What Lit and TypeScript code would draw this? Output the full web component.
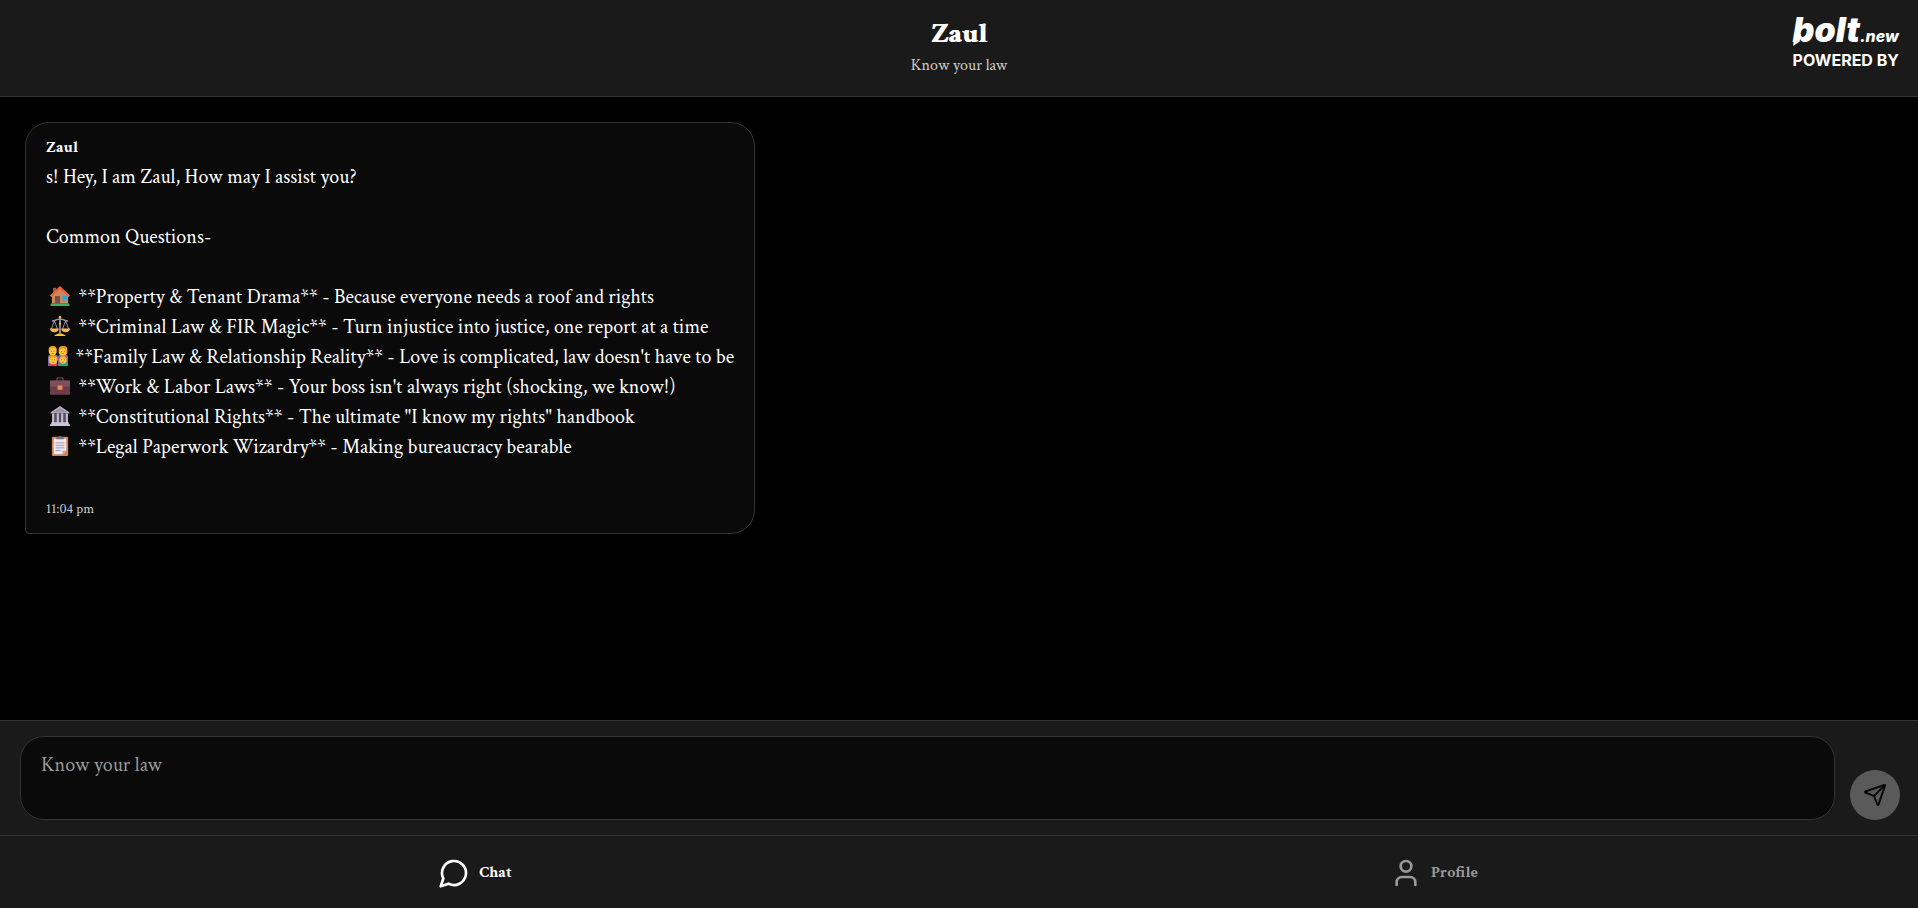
import { LitElement, html, css, svg } from "lit";
import { customElement, state } from "lit/decorators.js";

const home = svg`
  <rect x="1" y="28" width="30" height="4" rx="1" fill="#3fae6b"/>
  <rect x="5" y="3" width="5" height="9" fill="#b3593f"/>
  <path d="M3 16 16 4l13 12v12H3z" fill="#c98a5c"/>
  <path d="M16 0 0 15l2 3L16 5l14 13 2-3z" fill="#f4623a"/>
  <rect x="8" y="16" width="8" height="12" fill="#7d4a4c"/>
  <rect x="20" y="16" width="7" height="7" fill="#29a4e8"/>`;
const scales = svg`
  <path d="M16 2v26" stroke="#b9abc6" stroke-width="2.4"/>
  <path d="M3 8c5 0 7-3 13-3s8 3 13 3" stroke="#a294b0" stroke-width="2" fill="none"/>
  <path d="M7 8 2 21M7 8l5 13M25 8l-5 13M25 8l5 13" stroke="#b9abc6" stroke-width="1.3"/>
  <path d="M0 20h14c0 4-3 6-7 6s-7-2-7-6zM18 20h14c0 4-3 6-7 6s-7-2-7-6z" fill="#f8b84b"/>
  <circle cx="16" cy="2" r="2" fill="#f9c23c"/><circle cx="16" cy="12" r="1.8" fill="#f9c23c"/>
  <path d="M7 32c0-2 3-2 6-4h6c3 2 6 2 6 4z" fill="#fcc22e"/>`;
const family = svg`
  <path d="M0 17q0-3 4-3h8q4 0 4 3v6H0z" fill="#4b83d4"/>
  <path d="M16 17q0-3 4-3h8q4 0 4 3v15H16z" fill="#8b5fbf"/>
  <rect x="0" y="20" width="5" height="12" fill="#3b78c8"/>
  <rect x="1" y="0" width="13" height="14" rx="6" fill="#f59f16"/>
  <rect x="2" y="3" width="11" height="12" rx="5" fill="#ffc83d"/>
  <rect x="17" y="0" width="14" height="15" rx="6" fill="#ee9b19"/>
  <rect x="18" y="4" width="11" height="11" rx="5" fill="#ffc83d"/>
  <path d="M1 32v-3q0-3 4-3h7q3 0 3 3v3z" fill="#e5375e"/>
  <path d="M17 32v-3q0-3 4-3h6q4 0 4 3v3z" fill="#25a878"/>
  <rect x="1" y="15" width="14" height="14" rx="6" fill="#f59f16"/>
  <rect x="3" y="18" width="11" height="11" rx="5" fill="#ffc83d"/>
  <rect x="18" y="16" width="12" height="12" rx="6" fill="#f8ad27"/>
  <rect x="19" y="19" width="10" height="9" rx="5" fill="#ffc83d"/>
  <path d="M5 8h1M9 8h1M21 9h1M26 9h1M6 22h1M10 22h1M21 22h1M26 22h1" stroke="#5b3b24" stroke-width="1.5"/>
  <path d="M6 12h3M22 12h3M7 26h3M22 26h3" stroke="#c04f2b" stroke-width="1.2"/>`;
const briefcase = svg`
  <path d="M11 8V5q0-2 2-2h6q2 0 2 2v3" stroke="#6b4650" stroke-width="2" fill="none"/>
  <rect x="0" y="7" width="32" height="23" rx="2" fill="#6d3d4b"/>
  <path d="M0 9q0-2 2-2h28q2 0 2 2v9H0z" fill="#80505a"/>
  <path d="M0 18h32" stroke="#5a3442" stroke-width="1"/>
  <rect x="12" y="15" width="8" height="7" rx="1" fill="#f08a5d"/>`;
const classical = svg`
  <path d="M1 10 16 0l15 10v2H1z" fill="#b4acbc"/>
  <path d="M5 10 16 3l11 7z" fill="#998ea4"/>
  <rect x="4" y="12" width="24" height="15" fill="#584b68"/>
  <path d="M5 12v15M12.5 12v15M19.5 12v15M27 12v15" stroke="#c6bdcc" stroke-width="3.4"/>
  <path d="M2 26h28v3H2zM0 29h32v3H0z" fill="#cdc4d6"/>`;
const clipboard = svg`
  <rect x="3" y="1" width="26" height="31" rx="2" fill="#d98252"/>
  <path d="M6 4h20v19l-6 6H6z" fill="#eee8f4"/>
  <path d="M20 29v-6h6z" fill="#b8a9c8"/>
  <path d="M10 5V2h3q0-2 3-2t3 2h3v3z" fill="#74707c"/>
  <path d="M9 11h14M9 15h14M9 19h14M9 23h8" stroke="#9c93aa" stroke-width="1.5"/>`;

const topics = [
  { icon: home, name: "Property & Tenant Drama", note: "Because everyone needs a roof and rights" },
  { icon: scales, name: "Criminal Law & FIR Magic", note: "Turn injustice into justice, one report at a time" },
  { icon: family, snug: true, name: "Family Law & Relationship Reality", note: "Love is complicated, law doesn't have to be" },
  { icon: briefcase, name: "Work & Labor Laws", note: "Your boss isn't always right (shocking, we know!)" },
  { icon: classical, name: "Constitutional Rights", note: 'The ultimate "I know my rights" handbook' },
  { icon: clipboard, name: "Legal Paperwork Wizardry", note: "Making bureaucracy bearable" },
];

@customElement("app-root")
export class AppRoot extends LitElement {
  @state() private draft = "";
  @state() private tab = "chat";

  static styles = css`
    :host {
      display: flex;
      flex-direction: column;
      height: 100vh;
      background: #000;
      color: #fff;
      font-family: "Crimson Text", "Liberation Serif", serif;
    }
    * { box-sizing: border-box; }
    .header {
      position: relative;
      padding: 17px 20px 20px;
      text-align: center;
      background: #1a1a1a;
      border-bottom: 1px solid #333;
    }
    .title { margin: 0; font-size: 28px; line-height: 34px; font-weight: 700; text-shadow: 1px 0 currentColor; }
    .tagline { margin: 5px 0 0; font-size: 16px; line-height: 20px; color: #ccc; }
    .badge {
      position: absolute;
      top: 10px;
      right: 19px;
      color: #fff;
      text-decoration: none;
      font-family: Inter, sans-serif;
      text-align: left;
    }
    .brand { display: flex; align-items: baseline; height: 40px; line-height: 40px; font-style: italic; }
    .bolt { font-size: 34px; font-weight: 900; }
    .new { font-size: 16px; font-weight: 800; }
    .tail { position: absolute; left: 0; top: 24px; width: 10px; height: 12px; fill: #fff; }
    .powered { display: block; font-size: 16px; line-height: 20px; font-weight: 700; }
    .log { flex: 1; min-height: 0; overflow: auto; padding: 25px; }
    .bubble {
      width: fit-content;
      max-width: 80%;
      padding: 15px 20px;
      background: #0a0a0a;
      border: 1px solid #333;
      border-radius: 24px 24px 24px 4px;
    }
    .sender { margin: 0 0 4px; font-size: 16px; line-height: 20px; font-weight: 700; }
    .text { margin: 0 0 30px; font-size: 20px; line-height: 30px; }
    .topics { list-style: none; padding: 0; }
    .emoji { width: 20px; height: 20px; margin: 0 4px; vertical-align: -3px; }
    .emoji.snug { margin: 0 3px 0 2px; }
    .time { display: block; margin-top: 38px; font-size: 14px; line-height: 18px; color: #ccc; }
    .composer {
      display: flex;
      align-items: flex-end;
      gap: 15px;
      padding: 15px 18px 15px 20px;
      background: #1a1a1a;
      border-top: 1px solid #333;
    }
    .input {
      flex: 1;
      height: 84px;
      padding: 16px 20px;
      resize: none;
      outline: none;
      color: #fff;
      background: #0a0a0a;
      border: 1px solid #333;
      border-radius: 24px;
      font: 20px/25px "Crimson Text", "Liberation Serif", serif;
    }
    .input::placeholder { color: #999; opacity: 1; }
    .send {
      display: grid;
      place-items: center;
      width: 50px;
      height: 50px;
      padding: 0;
      border: 0;
      border-radius: 50%;
      background: #5a5a5a;
      color: #0a0a0a;
    }
    .line { fill: none; stroke: currentColor; stroke-width: 2; stroke-linecap: round; stroke-linejoin: round; }
    .send .line { width: 24px; height: 24px; }
    .nav {
      display: flex;
      justify-content: space-around;
      height: 73px;
      padding-top: 2px;
      background: #1a1a1a;
      border-top: 1px solid #333;
    }
    .tab {
      display: flex;
      align-items: center;
      gap: 9px;
      padding: 0 2px 0 0;
      border: 0;
      background: none;
      color: #999;
      font: 700 16px/20px "Crimson Text", "Liberation Serif", serif;
    }
    .tab.active { color: #fff; }
    .tab .line { width: 32px; height: 32px; }
  `;

  private pick(name: string) {
    this.tab = name;
  }

  render() {
    return html`
      <header class="header">
        <h1 class="title">Zaul</h1>
        <p class="tagline">Know your law</p>
        <a class="badge" href="#">
          <span class="brand"><span class="bolt">bolt</span><span class="new">.new</span></span>
          <svg class="tail" viewBox="0 0 10 12" aria-hidden="true"><path d="M2 0h6L6 8 0 12z" /></svg>
          <span class="powered">POWERED BY</span>
        </a>
      </header>

      <main class="log">
        <article class="bubble">
          <h2 class="sender">Zaul</h2>
          <p class="text">s! Hey, I am Zaul, How may I assist you?</p>
          <p class="text">Common Questions-</p>
          <ul class="text topics">
            ${topics.map(
              (t) => html`<li>
                <svg class="emoji ${t.snug ? "snug" : ""}" viewBox="0 0 32 32" aria-hidden="true" fill="none">${t.icon}</svg>
                **${t.name}** - ${t.note}
              </li>`
            )}
          </ul>
          <time class="time">11:04 pm</time>
        </article>
      </main>

      <form class="composer" @submit=${(e: Event) => e.preventDefault()}>
        <textarea
          class="input"
          aria-label="Message"
          placeholder="Know your law"
          .value=${this.draft}
          @input=${(e: Event) => (this.draft = (e.target as HTMLTextAreaElement).value)}
        ></textarea>
        <button class="send" type="submit" aria-label="Send">
          <svg class="line" viewBox="0 0 24 24">
            <path d="M14.536 21.686a.5.5 0 0 0 .937-.024l6.5-19a.496.496 0 0 0-.635-.635l-19 6.5a.5.5 0 0 0-.024.937l7.93 3.18a2 2 0 0 1 1.112 1.11z" />
            <path d="m21.854 2.147-10.94 10.939" />
          </svg>
        </button>
      </form>

      <nav class="nav">
        <button class="tab ${this.tab === "chat" ? "active" : ""}" type="button" @click=${() => this.pick("chat")}>
          <svg class="line" viewBox="0 0 24 24" aria-hidden="true"><path d="M7.9 20A9 9 0 1 0 4 16.1L2 22Z" /></svg>
          <span>Chat</span>
        </button>
        <button class="tab ${this.tab === "profile" ? "active" : ""}" type="button" @click=${() => this.pick("profile")}>
          <svg class="line" viewBox="0 0 24 24" aria-hidden="true">
            <path d="M19 21v-2a4 4 0 0 0-4-4H9a4 4 0 0 0-4 4v2" />
            <circle cx="12" cy="7" r="4" />
          </svg>
          <span>Profile</span>
        </button>
      </nav>
    `;
  }
}
